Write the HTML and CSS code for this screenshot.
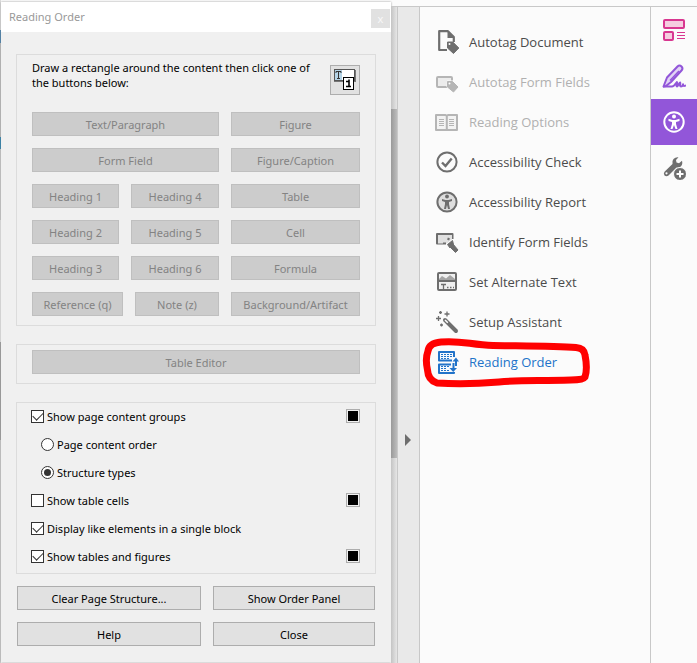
FILE: index.html
```html
<!DOCTYPE html>
<html lang="en">
<head>
<meta charset="utf-8">
<title>Reading Order</title>
<link rel="stylesheet" href="styles.css">
</head>
<body>
<div class="app">
  <div class="page-edge"></div>
  <section class="dialog" aria-label="Reading Order">
    <header class="titlebar">
      <h1 class="title">Reading Order</h1>
      <button class="close" type="button">x</button>
    </header>
    <div class="dialog-body">
      <div class="group tags">
        <div class="intro">
          <p class="intro-text">Draw a rectangle around the content then click one of the buttons below:</p>
          <button class="order-button" type="button" aria-label="Structure and order">
            <svg width="24" height="24" viewBox="0 0 24 24">
              <rect x="1.500" y="1.500" width="20" height="11" fill="#fff" stroke="#555"/>
              <path d="M1 13.500h22M22.500 2v11" stroke="#777" fill="none"/>
              <rect x="2" y="2" width="7" height="10" fill="#b4d3e6"/>
              <path d="M3 5V3.500h5V5M5.500 3.500v7M4 10.500h3" stroke="#333" fill="none"/>
              <rect x="10.500" y="9.500" width="10" height="12" fill="#fff" stroke="#000"/>
              <path d="M13 13.500h2.500M13 18.500h5M16 11.500v7" stroke="#000" stroke-width="1.600" fill="none"/>
            </svg>
          </button>
        </div>
        <div class="tag-grid">
          <button class="tag" type="button" disabled>Text/Paragraph</button>
          <button class="tag" type="button" disabled>Figure</button>
          <button class="tag" type="button" disabled>Form Field</button>
          <button class="tag" type="button" disabled>Figure/Caption</button>
          <div class="pair">
            <button class="tag" type="button" disabled>Heading 1</button>
            <button class="tag" type="button" disabled>Heading 4</button>
          </div>
          <button class="tag" type="button" disabled>Table</button>
          <div class="pair">
            <button class="tag" type="button" disabled>Heading 2</button>
            <button class="tag" type="button" disabled>Heading 5</button>
          </div>
          <button class="tag" type="button" disabled>Cell</button>
          <div class="pair">
            <button class="tag" type="button" disabled>Heading 3</button>
            <button class="tag" type="button" disabled>Heading 6</button>
          </div>
          <button class="tag" type="button" disabled>Formula</button>
          <div class="pair pair-notes">
            <button class="tag" type="button" disabled>Reference (q)</button>
            <button class="tag" type="button" disabled>Note (z)</button>
          </div>
          <button class="tag" type="button" disabled>Background/Artifact</button>
        </div>
      </div>
      <div class="group editor">
        <button class="tag" type="button" disabled>Table Editor</button>
      </div>
      <div class="group options">
        <div class="option"><label><input type="checkbox" checked>Show page content groups</label><button class="swatch" type="button" aria-label="Group colour"></button></div>
        <div class="option nested"><label><input type="radio" name="groups">Page content order</label></div>
        <div class="option nested"><label><input type="radio" name="groups" checked>Structure types</label></div>
        <div class="option"><label><input type="checkbox">Show table cells</label><button class="swatch" type="button" aria-label="Cell colour"></button></div>
        <div class="option"><label><input type="checkbox" checked>Display like elements in a single block</label></div>
        <div class="option"><label><input type="checkbox" checked>Show tables and figures</label><button class="swatch" type="button" aria-label="Figure colour"></button></div>
      </div>
      <div class="actions">
        <button class="action" type="button">Clear Page Structure...</button>
        <button class="action" type="button">Show Order Panel</button>
        <button class="action" type="button">Help</button>
        <button class="action" type="button">Close</button>
      </div>
    </div>
  </section>
  <div class="scroll-edge"><div class="thumb"></div></div>
  <div class="gutter">
    <button class="collapse" type="button" aria-label="Collapse panel"><svg width="6" height="12" viewBox="0 0 6 12"><path d="M0 0L6 6L0 12Z" fill="#6e6e6e"/></svg></button>
  </div>
  <nav class="tools" aria-label="Accessibility tools">
    <a class="tool" href="#"><svg class="icon" viewBox="0 0 24 24">
      <path d="M12 20H4.200V1.200h8.800l5.800 5.800v5" fill="none" stroke="#6e6e6e" stroke-width="2.200" stroke-linejoin="round"/><path d="M12.500 1v7h6.500z" fill="#6e6e6e"/>
      <path d="M12.500 12h5.300l6 6-5.300 5.500-6-5.500z" fill="#6e6e6e" stroke="#6e6e6e" stroke-linejoin="round"/><circle cx="14.500" cy="14" r="1" fill="#fbfbfb"/></svg>Autotag Document</a>
    <a class="tool off" href="#"><svg class="icon" viewBox="0 0 24 24">
      <rect x="2" y="7" width="15" height="10" rx="1" fill="#ececec" stroke="#b5b5b5" stroke-width="2"/>
      <path d="M12 10.500h6l6.500 6.500-5.500 6-7.500-6z" fill="#fbfbfb"/><path d="M12.500 11.500h5l5.500 5.500-4.500 5-6-5z" fill="#b5b5b5" stroke="#b5b5b5" stroke-linejoin="round"/><circle cx="14.500" cy="13.500" r="1" fill="#fff"/></svg>Autotag Form Fields</a>
    <a class="tool off" href="#"><svg class="icon" viewBox="0 0 24 24">
      <path d="M1 5h9.500l1.300 1 1.200-1H22v15H1zM11.800 6v14" fill="#f3f3f3" stroke="#b5b5b5" stroke-width="2" stroke-linejoin="round"/>
      <path d="M4 9.500h5M4 11.500h5M4 13.500h5M4 15.500h5M14 9.500h5M14 11.500h5M14 13.500h5M14 15.500h5" stroke="#b5b5b5"/></svg>Reading Options</a>
    <a class="tool" href="#"><svg class="icon" viewBox="0 0 24 24">
      <circle cx="12" cy="12" r="9.600" fill="none" stroke="#6e6e6e" stroke-width="2"/><path d="M7 12.500l3.500 3.500L16.700 8.500" fill="none" stroke="#6e6e6e" stroke-width="2.400"/></svg>Accessibility Check</a>
    <a class="tool" href="#"><svg class="icon" viewBox="0 0 24 24">
      <circle cx="12" cy="12" r="9.600" fill="#dedede" stroke="#6e6e6e" stroke-width="2"/><circle cx="12" cy="6.500" r="1.900" fill="#6e6e6e"/>
      <path d="M7 9l3.500 1h3L17 9v2l-3 1v2l1 5h-2l-1-4-1 4H9l1-5v-2l-3-1z" fill="#6e6e6e"/></svg>Accessibility Report</a>
    <a class="tool" href="#"><svg class="icon" viewBox="0 0 24 24">
      <path d="M8 13.500H2V4h15.500v5" fill="#e0e0e0" stroke="#6e6e6e" stroke-width="2" stroke-linejoin="round"/>
      <path d="M17 5v4l-5 4.500H3V5z" fill="#e0e0e0"/><path d="M8 13.500h3M12.500 8.500l2 1" stroke="#6e6e6e" stroke-width="2"/>
      <path d="M12.500 14.500l5-4 1 4-3.500 3.500zM16 15l2-1 5 6-2.500 2.500-5.500-5.500z" fill="#6e6e6e" stroke="#6e6e6e" stroke-linejoin="round"/></svg>Identify Form Fields</a>
    <a class="tool" href="#"><svg class="icon" viewBox="0 0 24 24">
      <rect x="3" y="3" width="18" height="17" rx="1" fill="#f0f0f0" stroke="#6e6e6e" stroke-width="2"/><path d="M4 9l3-3 4 2.500 4-3.500 5 4v2H4z" fill="#a5a5a5"/>
      <path d="M3 11h18" stroke="#6e6e6e" stroke-width="2"/><path d="M6 14.500h5M8.500 14.500V19M12 17.500h1.500M15 17.500h1.500M18 17.500h1" stroke="#6e6e6e" stroke-width="1.300"/></svg>Set Alternate Text</a>
    <a class="tool" href="#"><svg class="icon" viewBox="0 0 24 24">
      <path d="M10 10l11 11" stroke="#6e6e6e" stroke-width="4" stroke-linecap="round"/><path d="M10 10l2.800 2.800" stroke="#fbfbfb" stroke-width="1.500"/>
      <path d="M12 1.500v5M9.500 4h5M5.500 1v3M4 2.500h3M3.500 6v5M1 8.500h5M6.500 13.500v3M5 15h3" stroke="#6e6e6e" stroke-width="1.300"/></svg>Setup Assistant</a>
    <a class="tool current" href="#"><svg class="icon" viewBox="0 0 24 24">
      <path d="M19 7V2H4v8.500h13M16 14.500H4V23h15v-1" fill="#f5f9fd" stroke="#2173c9" stroke-width="2" stroke-linejoin="round"/>
      <path d="M6 4.500h11M6 6.500h11M6 8.500h9M6 16.500h8M6 18.500h6M6 20.500h9" stroke="#2173c9" stroke-width="1" stroke-dasharray="2 1"/>
      <path d="M21 16v-6M18.500 13v7" stroke="#2173c9" stroke-width="2"/><path d="M17.500 11.500L21 7.500l3 4zM14.500 18h7.500l-3.800 4z" fill="#2173c9"/></svg>Reading Order
      <svg class="marker" viewBox="0 0 170 52" aria-hidden="true"><path d="M7 14Q8 6 20 5C40 3 50 8 72 8.500C100 9 135 9 155 10.500Q163 11 164 18C166 28 166 34 164 40Q162 43 150 43C115 44 100 43 78 45C55 47 30 47 16 46Q7 43 6.500 33Q4 22 7 14Z" fill="none" stroke="#f00" stroke-width="7" stroke-linejoin="round"/></svg></a>
  </nav>
  <nav class="rail" aria-label="Tool shortcuts">
    <a class="rail-item" href="#" aria-label="Organize"><svg class="icon" viewBox="0 0 24 24">
      <g fill="#f5cde0" stroke="#d83790" stroke-width="2"><rect x="2" y="2" width="20" height="8" rx="1"/><rect x="2" y="14" width="9" height="8" rx="1"/></g><path d="M15 14.500h8M15 17.500h8M15 20.500h8" stroke="#d83790"/></svg></a>
    <a class="rail-item" href="#" aria-label="Sign"><svg class="icon" viewBox="0 0 24 24">
      <path d="M1.500 22.500l3.500-9L15.500 2.500q2-2 4 0t0 4L9 18l-5 4z" fill="#e2d4f5" stroke="#9256d9" stroke-width="2" stroke-linejoin="round"/><path d="M8 16.500L17 7" stroke="#9256d9" stroke-width="1.500"/>
      <path d="M1 22.500h9c3 0 5-6 5-4s-1 4 0 4 2-4 3-4-1 4 1 4 2-3 2-2 0 2 3 1" fill="none" stroke="#9256d9" stroke-width="2"/></svg></a>
    <a class="rail-item active" href="#" aria-label="Accessibility"><svg class="icon" viewBox="0 0 24 24">
      <circle cx="12" cy="12" r="9.700" fill="none" stroke="#fff" stroke-width="2"/><circle cx="12" cy="6.500" r="2" fill="#fff"/>
      <path d="M6.500 8.800l4 1.200h3l4-1.200v2.200l-3.500 1v2l1.500 5h-2l-1.500-4-1.500 4h-2l1.500-5v-2L6.500 11z" fill="#fff"/></svg></a>
    <a class="rail-item" href="#" aria-label="More tools"><svg class="icon" viewBox="0 0 24 24">
      <path d="M16.500 1.200L14 4l.5 2.500 2.500.8 3-2.500q1 3.500-1.200 5.700-1.800 1.500-4.300 1L6.500 19.500q-2 1.500-4 0-1.300-2 0-3.800L10.500 8q-.8-2.800 1-5 2-2.200 5-1.800z" fill="#6e6e6e"/><circle cx="4.500" cy="17.300" r="1.100" fill="#fbfbfb"/>
      <circle cx="18" cy="18" r="6.500" fill="#6e6e6e" stroke="#fbfbfb"/><path d="M18 14.500v7M14.500 18h7" stroke="#fff" stroke-width="2"/></svg></a>
  </nav>
</div>
</body>
</html>
```
FILE: styles.css
```css
* { box-sizing: border-box; }
body {
  margin: 0;
  background: #fbfbfb;
  color: #000;
  font: 11px/15px "Noto Sans", "Open Sans", sans-serif;
}
button { font: inherit; padding: 0; margin: 0; }
p, h1 { margin: 0; font: inherit; }
.app {
  display: grid;
  grid-template-columns: 1px minmax(0, 390fr) 6px 23px minmax(0, 230fr) 47px;
  min-height: 100vh;
}
.page-edge {
  background: linear-gradient(#ddd 0 30px, #37a 30px 43px, #bbb 43px 137px, #17a 137px 149px, #ccc 149px 220px, #eee 220px 342px, #999 342px 440px, #ccc 440px);
}
.dialog {
  align-self: start;
  margin-top: 2px;
  background: #f0f0f0;
  box-shadow: 0 0 2px #999;
}
.titlebar {
  display: flex;
  justify-content: space-between;
  height: 30px;
  padding-left: 8px;
  background: #fff;
}
.title { color: #999; line-height: 30px; }
.close {
  width: 19px;
  height: 19px;
  margin: 7px 1px 0 0;
  border: 0;
  background: #e1e1e1;
  color: #f8f8f8;
  line-height: 17px;
}
.dialog-body { padding: 22px 15px 16px; }
.group { border: 1px solid #dcdcdc; padding: 5px 15px; }
.tags { padding-bottom: 9px; }
.intro { display: flex; justify-content: space-between; }
.intro-text { flex: 1; padding-right: 8px; }
.order-button {
  display: grid;
  place-items: center;
  width: 30px;
  height: 30px;
  margin-top: 5px;
  border: 1px solid #adadad;
  background: #e1e1e1;
}
.tag-grid {
  display: grid;
  grid-template-columns: 187fr 129fr;
  gap: 12px;
  margin-top: 17px;
}
.pair { display: grid; grid-template-columns: 87fr 88fr; gap: 12px; }
.pair-notes { grid-template-columns: 91fr 84fr; }
.tag {
  width: 100%;
  height: 24px;
  border: 1px solid #bfbfbf;
  background: #ccc;
  color: #838383;
  white-space: nowrap;
}
.editor { display: flex; margin-top: 18px; padding-bottom: 9px; }
.options { margin-top: 18px; padding: 0 15px 2px 14px; }
.option {
  display: flex;
  align-items: center;
  justify-content: space-between;
  height: 28px;
  padding-bottom: 2px;
}
.option label { display: flex; align-items: center; gap: 3px; white-space: nowrap; }
.nested { padding-left: 10px; }
input {
  appearance: none;
  display: grid;
  place-items: center;
  width: 13px;
  height: 13px;
  margin: 0;
  border: 1px solid #333;
  background: #fff;
}
input[type="radio"] { border-radius: 50%; }
input[type="radio"]:checked::after {
  content: "";
  width: 7px;
  height: 7px;
  border-radius: 50%;
  background: #333;
}
input[type="checkbox"]:checked::after {
  content: "";
  width: 9px;
  height: 5px;
  border: solid #333;
  border-width: 0 0 1px 1px;
  transform: translateY(-1px) rotate(-45deg);
}
.swatch {
  width: 14px;
  height: 14px;
  border: 1px solid #adadad;
  background: #000;
  box-shadow: inset 0 0 0 1px #f0f0f0;
}
.actions {
  display: grid;
  grid-template-columns: 184fr 162fr;
  gap: 12px;
  margin-top: 12px;
  padding: 0 1px;
}
.action {
  height: 24px;
  border: 1px solid #adadad;
  background: #e1e1e1;
  color: #000;
}
.scroll-edge {
  margin-top: 6px;
  padding-top: 102px;
  border-top: 1px solid #c8c8c8;
  background: linear-gradient(90deg, #c4c4c4, #e6e6e6);
}
.thumb { height: 349px; background: linear-gradient(90deg, #999, #bcbcbc); }
.gutter {
  margin-top: 6px;
  padding: 427px 0 0 7px;
  border: solid #c8c8c8;
  border-width: 1px 1px 0;
  background: #e9e9e9;
}
.collapse { display: block; border: 0; background: none; }
.collapse svg { display: block; }
.tools { margin-top: 6px; padding: 15px 0 0 15px; border-top: 1px solid #c8c8c8; }
.tool {
  position: relative;
  display: flex;
  align-items: center;
  gap: 10px;
  height: 40px;
  color: #4b4b4b;
  font-family: "Open Sans", "Noto Sans", sans-serif;
  font-size: 13px;
  line-height: 20px;
  text-decoration: none;
  white-space: nowrap;
}
.icon { flex: none; width: 24px; height: 24px; }
.off { color: #b0b0b0; }
.current { color: #2173c9; }
.marker { position: absolute; left: -14px; top: -5px; width: 170px; height: 52px; }
.rail { margin-top: 6px; border: solid #c8c8c8; border-width: 1px 0 0 1px; }
.rail-item { display: grid; place-items: center; height: 46px; }
.active { background: #9256d9; }
```
